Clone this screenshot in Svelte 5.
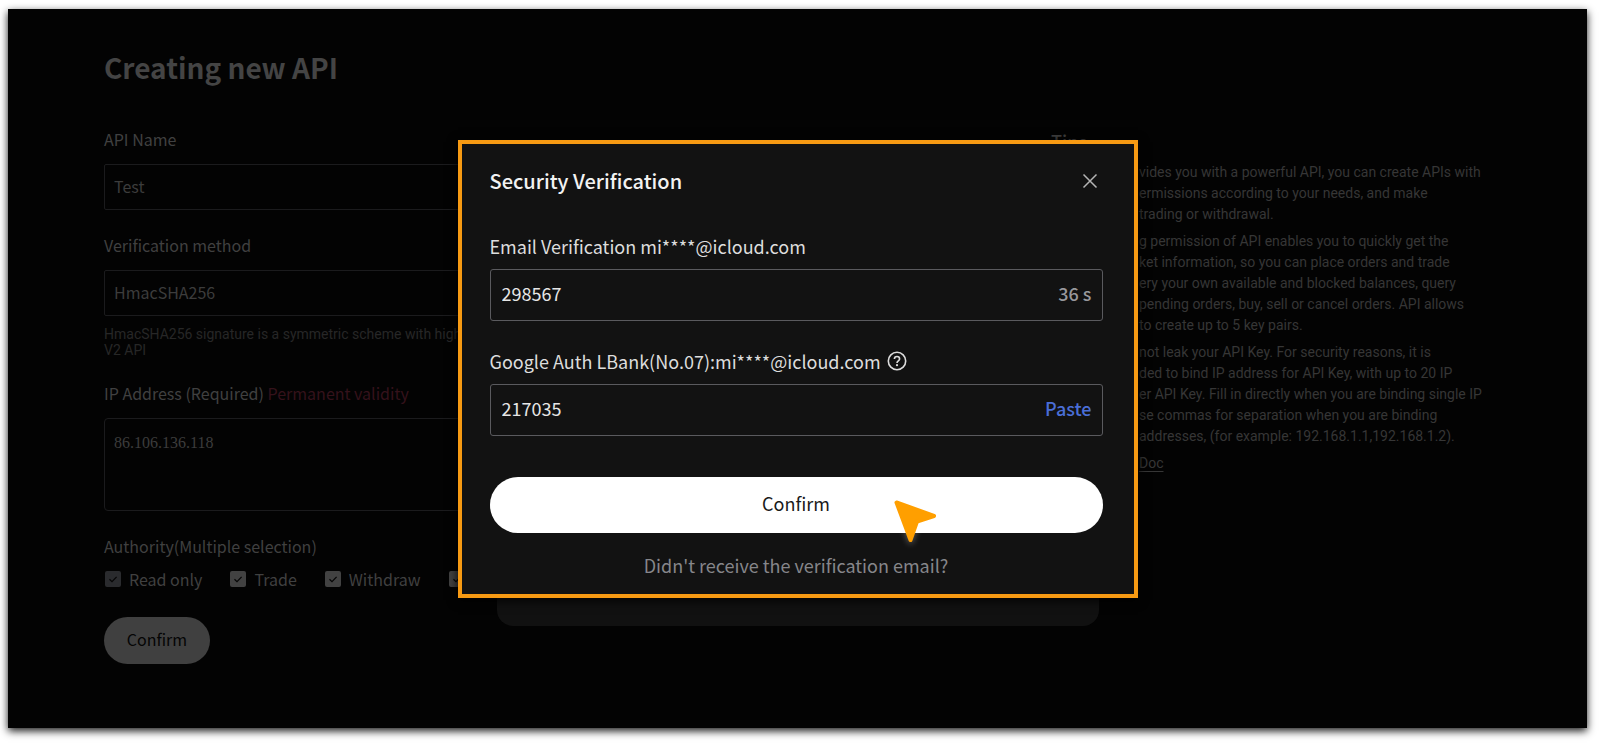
<script lang="ts">
	let apiName = $state('Test');
	let method = $state('HmacSHA256');
	let ips = $state('86.106.136.118');
	let emailCode = $state('298567');
	let authCode = $state('217035');

	// the last permission has no visible text of its own
	const permissions = [
		{ id: 'read', label: 'Read only', locked: true },
		{ id: 'trade', label: 'Trade', locked: false },
		{ id: 'withdraw', label: 'Withdraw', locked: false },
		{ id: 'other', label: '', locked: false }
	];

	const tips = [
		['vides you with a powerful API, you can create APIs with', 'ermissions according to your needs, and make', 'trading or withdrawal.'],
		[
			'g permission of API enables you to quickly get the',
			'ket information, so you can place orders and trade',
			'ery your own available and blocked balances, query',
			'pending orders, buy, sell or cancel orders. API allows',
			'to create up to 5 key pairs.'
		],
		[
			'not leak your API Key. For security reasons, it is',
			'ded to bind IP address for API Key, with up to 20 IP',
			'er API Key. Fill in directly when you are binding single IP',
			'se commas for separation when you are binding',
			'addresses, (for example: 192.168.1.1,192.168.1.2).'
		]
	];
</script>

<div class="frame">
	<main class="page">
		<h1>Creating new API</h1>
		<div class="columns">
			<form class="form">
				<label class="label" for="api-name">API Name</label>
				<input id="api-name" class="field" type="text" bind:value={apiName} />

				<label class="label next" for="method">Verification method</label>
				<select id="method" class="field" bind:value={method}>
					<option>HmacSHA256</option>
				</select>
				<p class="hint">HmacSHA256 signature is a symmetric scheme with high<br />V2 API</p>

				<label class="label next" for="ips">IP Address (Required) <span class="validity">Permanent validity</span></label>
				<textarea id="ips" class="field area" bind:value={ips}></textarea>

				<fieldset>
					<legend class="label">Authority(Multiple selection)</legend>
					<div class="checks">
						{#each permissions as p (p.id)}
							<label class="check" class:locked={p.locked}>
								<span class="box">
									<input type="checkbox" checked disabled={p.locked} aria-label={p.label || p.id} />
									<svg viewBox="0 0 16 16" aria-hidden="true"><path d="M4.5 8.2 7 10.6 11.6 5.8" /></svg>
								</span>
								{p.label}
							</label>
						{/each}
					</div>
				</fieldset>

				<button type="button" class="submit">Confirm</button>
			</form>

			<aside class="tips">
				<h2>Tips</h2>
				<div class="tips-body">
					{#each tips as lines}
						<p>{#each lines as line}{line}<br />{/each}</p>
					{/each}
					<p><a href="#doc">Doc</a></p>
				</div>
			</aside>
		</div>
	</main>

	<div class="overlay">
		<div class="sheet"></div>
		<div class="modal" role="dialog" aria-labelledby="modal-title">
			<header>
				<h2 id="modal-title">Security Verification</h2>
				<button type="button" class="close" aria-label="Close">
					<svg viewBox="0 0 16 16" aria-hidden="true"><path d="M1.5 1.5l13 13M14.5 1.5l-13 13" /></svg>
				</button>
			</header>

			<label class="code-label" for="email-code">Email Verification mi****@icloud.com</label>
			<div class="code">
				<input id="email-code" type="text" bind:value={emailCode} />
				<span class="timer">36 s</span>
			</div>

			<label class="code-label second" for="auth-code">
				Google Auth LBank(No.07):mi****@icloud.com
				<svg class="help" viewBox="0 0 20 20" aria-hidden="true">
					<circle cx="10" cy="10" r="8.7" />
					<path d="M7.4 8.1C7.4 6.5 8.5 5.5 10 5.5s2.6 1 2.6 2.4c0 1.9-2.6 2-2.6 4" />
					<circle class="dot" cx="10" cy="14.2" r="1.1" />
				</svg>
			</label>
			<div class="code">
				<input id="auth-code" type="text" bind:value={authCode} />
				<button type="button" class="paste">Paste</button>
			</div>

			<div class="action">
				<button type="button" class="confirm">Confirm</button>
				<svg class="pointer" viewBox="0 0 44 44" aria-hidden="true">
					<path d="M2.5 2.5 40 16 23 21.5 16.5 40Z" />
				</svg>
			</div>
			<a class="resend" href="#resend">Didn't receive the verification email?</a>
		</div>
	</div>
</div>

<style>
	:global(body) { background: #fff; }
	/* keep the frame's margins inside the page */
	:global(#app) { display: flow-root; }

	.frame {
		--ui: 'Noto Sans CJK SC', 'Noto Sans', sans-serif;
		--small: Roboto, 'Noto Sans', sans-serif;
		position: relative;
		margin: 9px 13px 16px 8px;
		background: #030303;
		box-shadow: 0 3px 8px rgba(0, 0, 0, 0.9);
		font-family: var(--ui);
		font-size: 16px;
		color: #404040;
	}

	input, select, textarea, button {
		font: inherit;
		color: inherit;
		margin: 0;
		box-sizing: border-box;
	}
	button { cursor: pointer; border: none; padding: 0 0 4px; }

	.page { padding: 38px 96px 64px; }
	h1 {
		margin: 0;
		font-size: 28px;
		line-height: 40px;
		font-weight: 700;
		color: #444;
	}
	.columns {
		display: grid;
		grid-template-columns: minmax(0, 1fr) 440px;
		gap: 100px;
		margin-top: 40px;
	}

	.form { display: flex; flex-direction: column; }
	.label {
		display: block;
		padding: 0;
		line-height: 24px;
		margin-bottom: 13px;
	}
	.next { margin-top: 23px; }
	.validity { color: #35121b; }
	.field {
		width: 100%;
		height: 46px;
		padding: 0 9px 3px;
		background: transparent;
		border: 1px solid #1b1b1d;
		border-radius: 2px;
		outline: none;
		appearance: none;
		color: #3c3c3c;
	}
	.area {
		display: block;
		height: 93px;
		padding: 14px 9px;
		border-radius: 4px;
		resize: none;
		font-family: 'Liberation Serif', serif;
		line-height: 20px;
	}
	.hint {
		margin: 10px 0 0;
		font-family: var(--small);
		font-size: 14px;
		line-height: 16px;
		color: #272727;
	}
	fieldset { border: none; margin: 23px 0 0; padding: 0; min-width: 0; }
	fieldset .label { margin-bottom: 9px; }
	.checks { display: flex; gap: 28px; padding-left: 1px; }
	.check { display: flex; align-items: center; gap: 8px; line-height: 24px; white-space: nowrap; }
	.box { position: relative; width: 16px; height: 16px; }
	.box input {
		display: block;
		appearance: none;
		width: 16px;
		height: 16px;
		border-radius: 2px;
		background: #424242;
	}
	.locked .box input { background: #2a2b2e; }
	.box svg {
		position: absolute;
		inset: 0;
		fill: none;
		stroke: #050505;
		stroke-width: 1.2;
		pointer-events: none;
	}
	.submit {
		width: 106px;
		height: 47px;
		margin-top: 26px;
		border-radius: 24px;
		background: #404040;
		color: #050505;
	}

	.tips h2 {
		margin: 2px 0 0;
		font-size: 18px;
		line-height: 24px;
		font-weight: 500;
	}
	.tips-body {
		margin-top: 9px;
		padding-left: 88px;
		font-family: var(--small);
		font-size: 14px;
		line-height: 21px;
		color: #363636;
		white-space: nowrap;
	}
	.tips p { margin: 0 0 6px; }
	.tips a { color: inherit; text-underline-offset: 3px; }

	.overlay {
		position: absolute;
		inset: 0;
		display: grid;
		place-items: center;
	}
	.sheet, .modal { grid-area: 1 / 1; box-sizing: border-box; }
	.sheet {
		align-self: end;
		width: 602px;
		height: 360px;
		margin-bottom: 102px;
		border-radius: 16px;
		background: #111;
	}
	.modal {
		position: relative;
		width: 680px;
		padding: 23px 31px 16px 28px;
		border: 4px solid #f79a13;
		background: #121212;
		box-shadow: 0 2px 10px #000;
		color: #ddd;
		font-size: 18px;
	}
	header {
		display: flex;
		justify-content: space-between;
		align-items: center;
		padding-right: 5px;
		margin-bottom: 38px;
	}
	header h2 {
		margin: 0;
		font-size: 20px;
		line-height: 28px;
		font-weight: 500;
		color: #f2f2f2;
	}
	.close { display: flex; padding: 0; background: none; }
	.close svg { width: 16px; height: 16px; fill: none; stroke: #b4b4b4; stroke-width: 1.5; }

	.code-label {
		display: flex;
		align-items: center;
		gap: 6px;
		line-height: 26px;
		margin-bottom: 10px;
	}
	.second { margin-top: 27px; }
	.help { width: 20px; height: 20px; fill: none; stroke: #ddd; stroke-width: 1.6; }
	.help .dot { fill: #ddd; stroke: none; }
	.code {
		display: flex;
		align-items: center;
		height: 52px;
		box-sizing: border-box;
		padding: 0 10px 3px 11px;
		border: 1px solid #5a5a5e;
		border-radius: 3px;
	}
	.code input {
		flex: 1;
		min-width: 0;
		padding: 0;
		border: none;
		outline: none;
		background: none;
		color: #e6e6e6;
	}
	.timer { font-weight: 500; color: #98989c; }
	.paste { padding: 0; background: none; font-weight: 500; color: #4a6ed6; }

	.action { position: relative; margin-top: 41px; }
	.confirm {
		display: block;
		width: 100%;
		height: 56px;
		border-radius: 28px;
		background: #fff;
		color: #1a1a1a;
	}
	.pointer {
		position: absolute;
		left: 404px;
		top: 23px;
		width: 44px;
		height: 44px;
		overflow: visible;
		fill: #ff9f00;
		stroke: #ff9f00;
		stroke-width: 4;
		stroke-linejoin: round;
		filter: drop-shadow(0 2px 3px rgba(255, 255, 255, 0.3));
	}
	.resend {
		display: block;
		margin-top: 19px;
		line-height: 26px;
		text-align: center;
		text-decoration: none;
		color: #86868a;
	}
</style>
